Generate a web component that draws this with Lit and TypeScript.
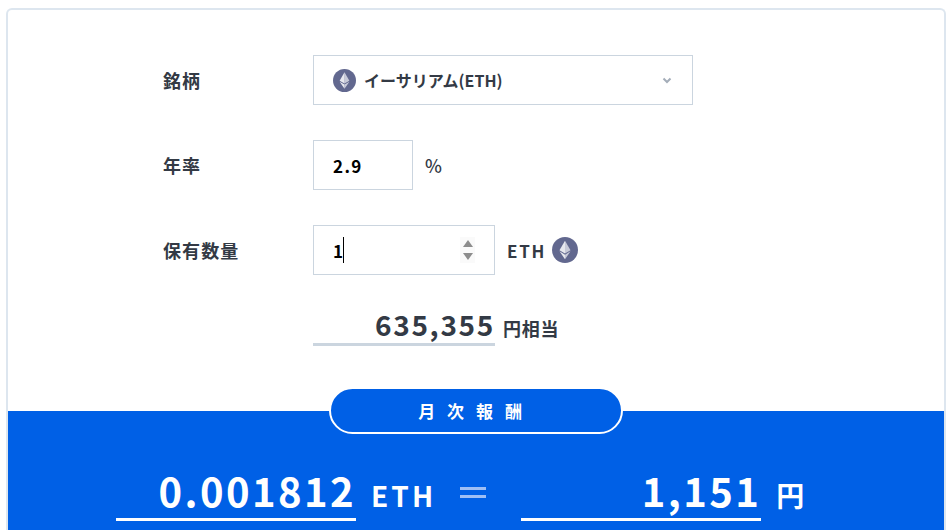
import { LitElement, html, css } from 'lit';
import { customElement } from 'lit/decorators.js';

const ethIcon = (size: number) => html`
  <svg class="eth" width=${size} height=${size} viewBox="0 0 24 24" aria-hidden="true">
    <circle cx="12" cy="12" r="12" fill="#62688f"></circle>
    <path d="M12 3.5 L6.9 12.2 L12 15.2 Z" fill="#ffffff" fill-opacity="0.85"></path>
    <path d="M12 3.5 L17.1 12.2 L12 15.2 Z" fill="#ffffff" fill-opacity="0.65"></path>
    <path d="M6.9 13.2 L12 20.5 L12 16.3 Z" fill="#ffffff" fill-opacity="0.85"></path>
    <path d="M17.1 13.2 L12 20.5 L12 16.3 Z" fill="#ffffff" fill-opacity="0.65"></path>
  </svg>
`;

@customElement('app-root')
export class AppRoot extends LitElement {
  static styles = css`
    :host {
      display: block;
      height: 530px;
      overflow: hidden;
      background: #fff;
      color: #333a45;
      font-family: 'Noto Sans CJK JP', 'Noto Sans', sans-serif;
    }

    .card {
      box-sizing: border-box;
      width: 940px;
      margin: 8px 0 0 6px;
      border: 2px solid #dde6ef;
      border-bottom: none;
      border-radius: 6px 6px 0 0;
      background: #fff;
    }

    .form {
      display: flex;
      flex-direction: column;
      gap: 35px;
      padding: 45px 0 0 155px;
    }

    .row {
      display: flex;
      align-items: center;
      height: 50px;
    }

    .label {
      width: 150px;
      font-size: 18px;
      font-weight: 700;
      letter-spacing: 0.06em;
    }

    .box {
      box-sizing: border-box;
      display: flex;
      align-items: center;
      height: 50px;
      border: 1px solid #cbd5df;
      background: #fff;
    }

    .select {
      width: 380px;
      padding: 0 20px 0 19px;
      gap: 8px;
      font-size: 16px;
      font-weight: 700;
    }

    .select .name {
      flex: 1;
    }

    .rate {
      width: 100px;
      padding-left: 19px;
    }

    .amount {
      width: 182px;
      padding-left: 19px;
    }

    .value {
      font-size: 17px;
      font-weight: 700;
      letter-spacing: 0.08em;
      color: #000;
    }

    .caret {
      width: 1px;
      height: 26px;
      margin-left: -1px;
      background: #000;
    }

    .spin {
      display: flex;
      flex-direction: column;
      justify-content: space-between;
      align-items: center;
      box-sizing: border-box;
      width: 15px;
      height: 26px;
      padding: 3px 0 3px;
      margin-left: auto;
      margin-right: 19px;
      background: #fafafa;
    }

    .unit {
      margin-left: 12px;
      font-size: 18px;
      font-weight: 500;
    }

    .eth-unit {
      display: flex;
      align-items: center;
      gap: 6px;
      margin-left: 12px;
      font-size: 17px;
      font-weight: 700;
      letter-spacing: 0.1em;
    }

    .equiv {
      display: flex;
      align-items: flex-end;
      height: 44px;
      margin-top: -8px;
      padding-left: 150px;
    }

    .equiv .num {
      box-sizing: border-box;
      width: 182px;
      height: 44px;
      border-bottom: 3px solid #cbd5df;
      font-size: 28px;
      font-weight: 700;
      line-height: 45px;
      letter-spacing: 0.06em;
      text-align: right;
    }

    .equiv .suffix {
      margin: 0 0 0 8px;
      font-size: 18px;
      font-weight: 700;
      line-height: 31px;
      letter-spacing: 0.04em;
      align-self: flex-end;
      padding-bottom: 2px;
    }

    .band {
      position: relative;
      margin-top: 65px;
      height: 150px;
      background: #0060e6;
      color: #fff;
    }

    /* the white ring only shows over the blue band */
    .pill {
      position: absolute;
      top: -24px;
      left: 321px;
      box-sizing: border-box;
      width: 294px;
      height: 47px;
      border: 2px solid #fff;
      border-radius: 24px;
      background: #0060e6;
      font-size: 17px;
      font-weight: 700;
      line-height: 43px;
      letter-spacing: 0.7em;
      text-align: center;
    }

    .result {
      display: flex;
      align-items: flex-end;
      padding: 52px 0 0 108px;
    }

    .result .num {
      box-sizing: border-box;
      width: 240px;
      height: 58px;
      border-bottom: 3px solid #fff;
      font-size: 40px;
      font-weight: 700;
      line-height: 54px;
      letter-spacing: 0.06em;
      text-align: right;
    }

    .result .cur {
      margin-left: 15px;
      font-size: 28px;
      font-weight: 700;
      line-height: 46px;
      letter-spacing: 0.11em;
      padding-bottom: 3px;
    }

    .equals {
      box-sizing: border-box;
      width: 26px;
      height: 11px;
      margin: 0 35px 23px 24px;
      border-top: 3px solid #9ebff5;
      border-bottom: 3px solid #9ebff5;
    }
  `;

  render() {
    return html`
      <div class="card">
        <div class="form">
          <div class="row">
            <div class="label">銘柄</div>
            <div class="box select">
              ${ethIcon(23)}
              <span class="name">イーサリアム(ETH)</span>
              <svg width="10" height="7" viewBox="0 0 10 7" aria-hidden="true">
                <path d="M1.5 1.5 L5 5 L8.5 1.5" fill="none" stroke="#a4adb9" stroke-width="2"></path>
              </svg>
            </div>
          </div>
          <div class="row">
            <div class="label">年率</div>
            <div class="box rate"><span class="value">2.9</span></div>
            <span class="unit">%</span>
          </div>
          <div class="row">
            <div class="label">保有数量</div>
            <div class="box amount">
              <span class="value">1</span><span class="caret"></span>
              <div class="spin">
                <svg width="10" height="7" viewBox="0 0 10 7" aria-hidden="true"><path d="M5 0 L10 7 L0 7 Z" fill="#8d8d8d"></path></svg>
                <svg width="10" height="7" viewBox="0 0 10 7" aria-hidden="true"><path d="M0 0 L10 0 L5 7 Z" fill="#8d8d8d"></path></svg>
              </div>
            </div>
            <div class="eth-unit">ETH ${ethIcon(26)}</div>
          </div>
          <div class="equiv">
            <div class="num">635,355</div>
            <div class="suffix">円相当</div>
          </div>
        </div>
        <div class="band">
          <div class="pill">月次報酬</div>
          <div class="result">
            <div class="num">0.001812</div>
            <div class="cur">ETH</div>
            <div class="equals"></div>
            <div class="num">1,151</div>
            <div class="cur">円</div>
          </div>
        </div>
      </div>
    `;
  }
}
